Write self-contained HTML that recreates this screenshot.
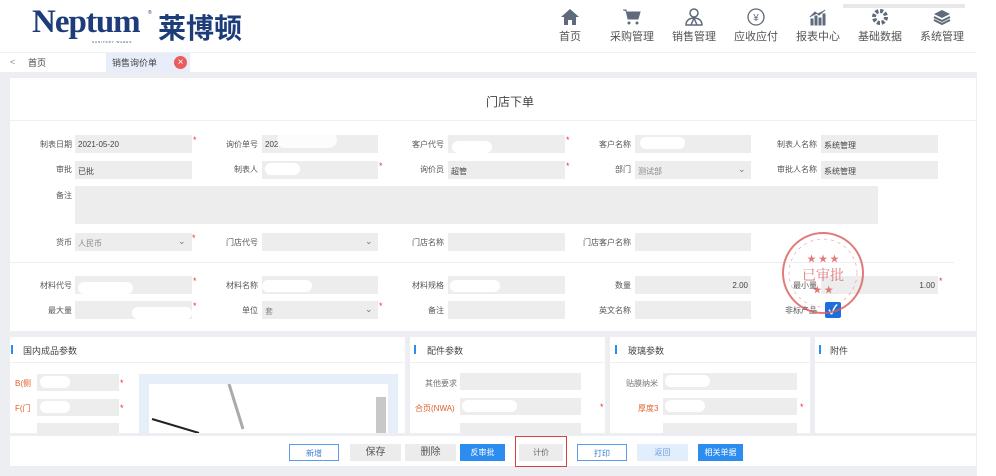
<!DOCTYPE html>
<html><head><meta charset="utf-8"><style>
*{margin:0;padding:0;box-sizing:border-box}
body{width:996px;height:476px;overflow:hidden;background:#fff;font-family:"Liberation Sans","Noto Sans CJK SC",sans-serif;font-size:8px;color:#555;position:relative}
.a{position:absolute}
.lbl{position:absolute;text-align:right;font-size:8px;color:#555;width:80px}
.in{position:absolute;background:#ededed;height:18px;font-size:8px;color:#444;padding:5px 3px}
.st{position:absolute;color:#e33;font-size:9px}
.cv{position:absolute;font-size:9px;color:#777}
.nav{position:absolute;top:8px;text-align:center;font-size:11px;color:#555;width:60px}
.nav svg{display:block;margin:0 auto 2px}
.btn{position:absolute;top:444px;height:17px;font-size:8px;text-align:center;line-height:17px}
.blob{position:absolute;background:#fff;border-radius:10px}
</style></head><body>
<!-- header -->
<div class="a" style="left:32px;top:4px;font-family:'Liberation Serif',serif;font-weight:bold;font-size:33px;color:#1d3c7a;letter-spacing:-1px">Neptum</div>
<div class="a" style="left:148px;top:10px;font-size:5px;color:#1d3c7a">®</div>
<div class="a" style="left:92px;top:40px;font-size:3px;color:#1d3c7a;letter-spacing:1px">SANITARY WARES</div>
<div class="a" style="left:158px;top:7px;font-size:28px;font-weight:bold;color:#1d3c7a;font-family:'Noto Sans CJK SC',sans-serif">莱博顿</div>
<div class="a" style="left:843px;top:4px;width:122px;height:4px;background:#e8e8e8"></div>
<div class="nav" style="left:540px"><svg width="20" height="18" viewBox="0 0 20 18"><path d="M10 1L1 9h3v8h4v-5h4v5h4V9h3z" fill="#5f6b7a"/></svg>首页</div>
<div class="nav" style="left:602px"><svg width="20" height="18" viewBox="0 0 20 18"><path d="M1 2h3l2 9h10l2-7H5" fill="#5f6b7a" stroke="#5f6b7a"/><circle cx="7" cy="15" r="1.5" fill="#5f6b7a"/><circle cx="15" cy="15" r="1.5" fill="#5f6b7a"/></svg>采购管理</div>
<div class="nav" style="left:664px"><svg width="20" height="18" viewBox="0 0 20 18"><circle cx="10" cy="5" r="4" fill="none" stroke="#5f6b7a" stroke-width="1.5"/><path d="M2 17c0-5 4-7 8-7s8 2 8 7zM10 10l-3 7M10 10l3 7" fill="none" stroke="#5f6b7a" stroke-width="1.5"/></svg>销售管理</div>
<div class="nav" style="left:726px"><svg width="20" height="18" viewBox="0 0 20 18"><circle cx="10" cy="9" r="8" fill="none" stroke="#5f6b7a" stroke-width="1.3"/><text x="10" y="13" font-size="10" text-anchor="middle" fill="#5f6b7a">¥</text></svg>应收应付</div>
<div class="nav" style="left:788px"><svg width="20" height="18" viewBox="0 0 20 18"><path d="M3 17V11h2v6zM7 17V8h2v9zM11 17V10h2v7zM15 17V6h2v11zM2 9l5-5 4 3 6-5" fill="#5f6b7a" stroke="#5f6b7a" stroke-width="1"/></svg>报表中心</div>
<div class="nav" style="left:850px"><svg width="20" height="18" viewBox="0 0 20 18"><circle cx="10" cy="9" r="6" fill="none" stroke="#5f6b7a" stroke-width="4" stroke-dasharray="3 1.7"/><circle cx="10" cy="9" r="2" fill="#fff"/></svg>基础数据</div>
<div class="nav" style="left:912px"><svg width="20" height="18" viewBox="0 0 20 18"><path d="M10 2l8 4-8 4-8-4z" fill="#5f6b7a"/><path d="M2 9l8 4 8-4M2 12l8 4 8-4" fill="none" stroke="#5f6b7a" stroke-width="2"/></svg>系统管理</div>
<div class="a" style="left:0;top:52px;width:976px;height:1px;background:#f0f0f0"></div>
<!-- tabs -->
<div class="a" style="left:10px;top:57px;font-size:9px;color:#888">&lt;</div>
<div class="a" style="left:28px;top:56px;font-size:9px;color:#444">首页</div>
<div class="a" style="left:106px;top:53px;width:84px;height:19px;background:#e7eef9"></div>
<div class="a" style="left:112px;top:56px;font-size:9px;color:#444">销售询价单</div>
<div class="a" style="left:174px;top:56px;width:13px;height:13px;border-radius:50%;background:#ec5b5b;color:#fff;font-size:10px;line-height:13px;text-align:center">×</div>
<!-- gray bg -->
<div class="a" style="left:0;top:72px;width:977px;height:404px;background:#eceef2"></div>
<div class="a" style="left:10px;top:78px;width:966px;height:253px;background:#fff"></div>
<div class="a" style="left:486px;top:93px;font-size:12px;color:#444">门店下单</div>
<div class="a" style="left:10px;top:120px;width:966px;height:1px;background:#f0f0f0"></div>
<!-- row1 -->
<div class="lbl" style="left:-8px;top:139px">制表日期</div><div class="in" style="left:75px;top:135px;width:117px">2021-05-20</div><div class="st" style="left:193px;top:135px">*</div>
<div class="lbl" style="left:178px;top:139px">询价单号</div><div class="in" style="left:262px;top:135px;width:116px">202</div>
<div class="lbl" style="left:364px;top:139px">客户代号</div><div class="in" style="left:448px;top:135px;width:117px"></div><div class="st" style="left:566px;top:135px">*</div>
<div class="lbl" style="left:551px;top:139px">客户名称</div><div class="in" style="left:635px;top:135px;width:116px"></div>
<div class="lbl" style="left:737px;top:139px">制表人名称</div><div class="in" style="left:821px;top:135px;width:117px">系统管理</div>
<!-- row2 -->
<div class="lbl" style="left:-8px;top:164px">审批</div><div class="in" style="left:75px;top:161px;width:117px">已批</div>
<div class="lbl" style="left:178px;top:164px">制表人</div><div class="in" style="left:262px;top:161px;width:116px"></div><div class="st" style="left:379px;top:161px">*</div>
<div class="lbl" style="left:364px;top:164px">询价员</div><div class="in" style="left:448px;top:161px;width:117px">超管</div><div class="st" style="left:566px;top:161px">*</div>
<div class="lbl" style="left:551px;top:164px">部门</div><div class="in" style="left:635px;top:161px;width:116px;color:#888">测试部</div><div class="cv" style="left:738px;top:164px">⌄</div>
<div class="lbl" style="left:737px;top:164px">审批人名称</div><div class="in" style="left:821px;top:161px;width:117px">系统管理</div>
<!-- textarea -->
<div class="lbl" style="left:-8px;top:190px">备注</div><div class="in" style="left:75px;top:186px;width:803px;height:38px"></div>
<!-- row4 -->
<div class="lbl" style="left:-8px;top:237px">货币</div><div class="in" style="left:75px;top:233px;width:117px;color:#888">人民币</div><div class="cv" style="left:178px;top:236px">⌄</div><div class="st" style="left:192px;top:233px">*</div>
<div class="lbl" style="left:178px;top:237px">门店代号</div><div class="in" style="left:262px;top:233px;width:116px"></div><div class="cv" style="left:365px;top:236px">⌄</div>
<div class="lbl" style="left:364px;top:237px">门店名称</div><div class="in" style="left:448px;top:233px;width:117px"></div>
<div class="lbl" style="left:551px;top:237px">门店客户名称</div><div class="in" style="left:635px;top:233px;width:116px"></div>
<div class="a" style="left:10px;top:262px;width:944px;height:1px;background:#eee"></div>
<!-- row5 -->
<div class="lbl" style="left:-8px;top:280px">材料代号</div><div class="in" style="left:75px;top:276px;width:117px"></div><div class="st" style="left:193px;top:276px">*</div>
<div class="lbl" style="left:178px;top:280px">材料名称</div><div class="in" style="left:262px;top:276px;width:116px"></div>
<div class="lbl" style="left:364px;top:280px">材料规格</div><div class="in" style="left:448px;top:276px;width:117px"></div>
<div class="lbl" style="left:551px;top:280px">数量</div><div class="in" style="left:635px;top:276px;width:116px;text-align:right">2.00</div>
<div class="lbl" style="left:737px;top:280px">最小量</div><div class="in" style="left:821px;top:276px;width:117px;text-align:right">1.00</div><div class="st" style="left:939px;top:276px">*</div>
<!-- row6 -->
<div class="lbl" style="left:-8px;top:305px">最大量</div><div class="in" style="left:75px;top:301px;width:117px"></div><div class="st" style="left:193px;top:301px">*</div>
<div class="lbl" style="left:178px;top:305px">单位</div><div class="in" style="left:262px;top:301px;width:116px;color:#888">套</div><div class="cv" style="left:365px;top:304px">⌄</div><div class="st" style="left:379px;top:301px">*</div>
<div class="lbl" style="left:364px;top:305px">备注</div><div class="in" style="left:448px;top:301px;width:117px"></div>
<div class="lbl" style="left:551px;top:305px">英文名称</div><div class="in" style="left:635px;top:301px;width:116px"></div>
<div class="lbl" style="left:737px;top:305px">非标产品</div>
<div class="a" style="left:825px;top:302px;width:16px;height:16px;background:#1a6fe0;border-radius:2px;color:#fff;font-size:13px;line-height:16px;text-align:center;font-weight:bold">✓</div>
<!-- blurs -->
<div class="blob" style="left:277px;top:132px;width:60px;height:16px;opacity:.8"></div>
<div class="blob" style="left:452px;top:141px;width:40px;height:12px"></div>
<div class="blob" style="left:640px;top:137px;width:45px;height:12px"></div>
<div class="blob" style="left:265px;top:163px;width:35px;height:12px"></div>
<div class="blob" style="left:78px;top:282px;width:55px;height:12px"></div>
<div class="blob" style="left:262px;top:280px;width:50px;height:12px"></div>
<div class="blob" style="left:450px;top:280px;width:50px;height:12px"></div>
<div class="blob" style="left:132px;top:307px;width:60px;height:12px"></div>
<!-- stamp -->
<svg class="a" style="left:779px;top:229px" width="88" height="88" viewBox="0 0 88 88"><circle cx="44" cy="44" r="40" fill="none" stroke="#d95a5a" stroke-width="2" opacity=".8"/><circle cx="44" cy="44" r="34" fill="none" stroke="#d95a5a" stroke-width=".6" stroke-dasharray="3 4" opacity=".6"/><text x="44" y="51" font-size="14" text-anchor="middle" fill="#d95a5a" opacity=".8" font-family="Noto Serif CJK SC,serif">已审批</text><text x="44" y="33" font-size="9" text-anchor="middle" fill="#d95a5a" opacity=".8">★ ★ ★</text><text x="44" y="64" font-size="9" text-anchor="middle" fill="#d95a5a" opacity=".8">★ ★</text></svg>
<!-- bottom panels -->
<div class="a" style="left:10px;top:337px;width:395px;height:96px;background:#fff"></div>
<div class="a" style="left:410px;top:337px;width:195px;height:96px;background:#fff"></div>
<div class="a" style="left:610px;top:337px;width:200px;height:96px;background:#fff"></div>
<div class="a" style="left:815px;top:337px;width:161px;height:96px;background:#fff"></div>
<div class="a" style="left:10px;top:362px;width:966px;height:1px;background:#eef0f3"></div>
<div class="a" style="left:11px;top:345px;width:2px;height:9px;background:#2d8cf0"></div><div class="a" style="left:23px;top:344px;font-size:9px;color:#444">国内成品参数</div>
<div class="a" style="left:414px;top:345px;width:2px;height:9px;background:#2d8cf0"></div><div class="a" style="left:427px;top:344px;font-size:9px;color:#444">配件参数</div>
<div class="a" style="left:615px;top:345px;width:2px;height:9px;background:#2d8cf0"></div><div class="a" style="left:628px;top:344px;font-size:9px;color:#444">玻璃参数</div>
<div class="a" style="left:819px;top:345px;width:2px;height:9px;background:#2d8cf0"></div><div class="a" style="left:830px;top:344px;font-size:9px;color:#444">附件</div>
<div class="a" style="left:15px;top:378px;color:#e0602c">B(侧</div><div class="in" style="left:37px;top:374px;width:82px;height:17px"></div><div class="st" style="left:120px;top:378px">*</div>
<div class="a" style="left:15px;top:403px;color:#e0602c">F(门</div><div class="in" style="left:37px;top:399px;width:82px;height:17px"></div><div class="st" style="left:120px;top:403px">*</div>
<div class="in" style="left:37px;top:423px;width:82px;height:10px"></div>
<div class="a" style="left:139px;top:374px;width:259px;height:59px;background:#e6eef9"></div>
<div class="a" style="left:149px;top:384px;width:239px;height:49px;background:#fff"></div>
<div class="a" style="left:376px;top:397px;width:10px;height:36px;background:#c8c8c8"></div>
<svg class="a" style="left:149px;top:384px" width="230" height="49"><path d="M80 0L94 45" stroke="#aaa" stroke-width="3"/><path d="M3 35L50 49" stroke="#222" stroke-width="2"/></svg>
<div class="blob" style="left:40px;top:376px;width:30px;height:12px"></div><div class="blob" style="left:40px;top:401px;width:30px;height:12px"></div>
<div class="a" style="left:425px;top:378px;color:#777">其他要求</div><div class="in" style="left:460px;top:373px;width:121px;height:17px"></div>
<div class="a" style="left:415px;top:403px;color:#e0602c">合页(NWA)</div><div class="in" style="left:460px;top:398px;width:121px;height:17px"></div><div class="st" style="left:600px;top:402px">*</div>
<div class="in" style="left:460px;top:423px;width:121px;height:10px"></div>
<div class="a" style="left:626px;top:378px;color:#777">贴膜纳米</div><div class="in" style="left:663px;top:373px;width:134px;height:17px"></div>
<div class="a" style="left:638px;top:403px;color:#e0602c">厚度3</div><div class="in" style="left:663px;top:398px;width:134px;height:17px"></div><div class="st" style="left:800px;top:402px">*</div>
<div class="in" style="left:663px;top:423px;width:134px;height:10px"></div>
<div class="blob" style="left:462px;top:400px;width:55px;height:12px"></div><div class="blob" style="left:665px;top:375px;width:45px;height:12px"></div><div class="blob" style="left:665px;top:400px;width:40px;height:12px"></div>
<!-- button bar -->
<div class="a" style="left:10px;top:436px;width:966px;height:30px;background:#fff"></div>
<div class="btn" style="left:289px;width:50px;border:1px solid #5b9be8;color:#3b7fd6">新增</div>
<div class="btn" style="left:350px;width:51px;background:#ececec;color:#555;font-size:10px">保存</div>
<div class="btn" style="left:405px;width:51px;background:#ececec;color:#555;font-size:10px">删除</div>
<div class="btn" style="left:460px;width:45px;background:#2d8cf0;color:#fff">反审批</div>
<div class="a" style="left:515px;top:436px;width:52px;height:31px;border:1.5px solid #d9403a"></div>
<div class="btn" style="left:519px;width:44px;background:#ececec;color:#666">计价</div>
<div class="btn" style="left:577px;width:50px;border:1px solid #5b9be8;color:#3b7fd6">打印</div>
<div class="btn" style="left:637px;width:51px;background:#e3eefc;color:#6a9fe0">返回</div>
<div class="btn" style="left:698px;width:45px;background:#2d8cf0;color:#fff">相关单据</div>
</body></html>
